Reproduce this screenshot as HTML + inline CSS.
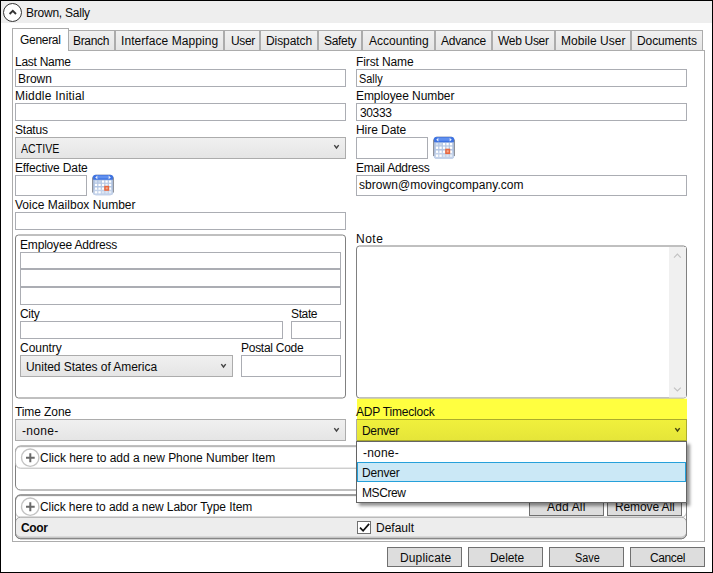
<!DOCTYPE html>
<html lang="en"><head><meta charset="utf-8"><title>Brown, Sally</title>
<style>
html,body{margin:0;padding:0}
body{width:713px;height:573px;position:relative;overflow:hidden;background:#fff;font-family:"Liberation Sans",sans-serif;font-size:12px;color:#000}
.t{position:absolute;white-space:nowrap;line-height:16px;height:16px;color:#0a0a0a;z-index:4}
.b{position:absolute;box-sizing:border-box}
.frame{left:0;top:0;width:713px;height:573px;border:1px solid #000;z-index:20}
.hdr{left:1px;top:1px;width:711px;height:21.5px;background:#eeeeee}
.panel{left:12px;top:50px;width:693px;height:492px;border:1px solid #acacac;background:#fff}
.tab{top:30px;height:21px;border:1px solid #acacac;background:linear-gradient(#f0f0f0,#e5e5e5)}
.tab.sel{top:28px;height:23px;background:#fff;border-bottom:none;z-index:2}
.tb{border:1px solid #abadb3;background:#fff}
.cb{border:1px solid #acacac;background:linear-gradient(#f0f0f0,#e5e5e5)}
.btn{border:1px solid #707070;background:#dddddd}
.dd{border:1px solid #646464;background:#fff;z-index:6;box-shadow:3px 3px 3px rgba(0,0,0,.42)}
.ddsel{border:1px solid #26a0da;background:#cbe8f6;z-index:6}
.sb{background:#f0f0f0}
svg{position:absolute;overflow:visible}
.ar{fill:none;stroke:#444;stroke-width:1.4}
.gb{fill:#fff;stroke:#808080;stroke-width:1}
.gl{fill:none;stroke:#b8b8b8;stroke-width:1}

</style></head>
<body>
<div class="b hdr"></div>
<svg style="left:3px;top:3px" width="19" height="19" viewBox="0 0 19 19"><circle cx="9.5" cy="9.5" r="9" fill="#fff" stroke="#333" stroke-width="1"/><path d="M6.6 11 L9.8 7.8 L13 11" fill="none" stroke="#333" stroke-width="1.9"/></svg>
<div class="b panel"></div>
<div class="b tab sel" style="left:12px;width:57px"></div>
<div class="b tab" style="left:68px;width:47px"></div>
<div class="b tab" style="left:115px;width:109px"></div>
<div class="b tab" style="left:224px;width:36px"></div>
<div class="b tab" style="left:260px;width:58px"></div>
<div class="b tab" style="left:318px;width:44px"></div>
<div class="b tab" style="left:362px;width:73px"></div>
<div class="b tab" style="left:435px;width:57px"></div>
<div class="b tab" style="left:492px;width:63px"></div>
<div class="b tab" style="left:555px;width:76px"></div>
<div class="b tab" style="left:631px;width:72px"></div>

<div class="b tb" style="left:15px;top:69px;width:331px;height:18px"></div>
<div class="b tb" style="left:15px;top:103px;width:331px;height:18px"></div>
<div class="b cb" style="left:15px;top:137px;width:331px;height:22px"></div>
<div class="b tb" style="left:15px;top:175px;width:72px;height:21px"></div>
<div class="b tb" style="left:15px;top:212px;width:331px;height:18px"></div>

<div class="b tb" style="left:356px;top:69px;width:331px;height:18px"></div>
<div class="b tb" style="left:356px;top:103px;width:331px;height:18px"></div>
<div class="b tb" style="left:356px;top:137px;width:72px;height:22px"></div>
<div class="b tb" style="left:356px;top:175px;width:331px;height:21px"></div>

<svg style="left:0;top:0" width="713" height="573" viewBox="0 0 713 573">
<!-- note -->
<rect class="gb" x="356.5" y="246" width="330" height="152" rx="3"/>
<rect x="669" y="247" width="17" height="150.5" fill="#f0f0f0"/>
<path d="M674 257.6 L677.4 254.2 L680.8 257.6" fill="none" stroke="#c2c2c2" stroke-width="1.2"/>
<path d="M674 387.6 L677.4 391 L680.8 387.6" fill="none" stroke="#c2c2c2" stroke-width="1.2"/>
<!-- employee address -->
<rect class="gb" x="15.5" y="235" width="330" height="163" rx="3"/>
<!-- phone -->
<rect class="gb" x="15.5" y="446" width="671" height="44" rx="5"/>
<rect class="gl" x="15.5" y="446.7" width="671" height="21.5" rx="5"/>
<circle cx="30.2" cy="457.7" r="8.7" fill="#fff" stroke="#c4c4c4" stroke-width="1.4"/>
<path d="M26 457.7 H34.7 M30.3 453.2 V462.3" fill="none" stroke="#6a6a6a" stroke-width="2"/>
<!-- labor -->
<rect class="gb" x="15.5" y="495" width="671" height="43.6" rx="5"/>
<rect class="gl" x="15.5" y="495.7" width="671" height="21.5" rx="5"/>
<rect x="15.5" y="517.3" width="671" height="21.4" rx="5" fill="#c6c6c6" stroke="#a0a0a0"/>
<rect x="16" y="517.8" width="670" height="18.6" rx="4.5" fill="#ededed"/>
<rect x="15.5" y="495" width="671" height="43.7" rx="5" fill="none" stroke="#808080"/>
<circle cx="30.2" cy="506.7" r="8.7" fill="#fff" stroke="#c4c4c4" stroke-width="1.4"/>
<path d="M26 506.7 H34.7 M30.3 502.2 V511.3" fill="none" stroke="#6a6a6a" stroke-width="2"/>
<!-- checkbox -->
<rect x="357.5" y="521.5" width="13" height="12" fill="#fff" stroke="#707070"/>
<path d="M360 527.6 L363.1 530.8 L369.1 523.9" fill="none" stroke="#111" stroke-width="1.7"/>
</svg>

<div class="b tb" style="left:20px;top:252px;width:321px;height:17px"></div>
<div class="b tb" style="left:20px;top:269px;width:321px;height:18px"></div>
<div class="b tb" style="left:20px;top:287px;width:321px;height:18px"></div>
<div class="b tb" style="left:20px;top:321px;width:263px;height:18px"></div>
<div class="b tb" style="left:291px;top:321px;width:50px;height:18px"></div>
<div class="b cb" style="left:20px;top:355px;width:213px;height:22px"></div>
<div class="b tb" style="left:241px;top:355px;width:100px;height:22px"></div>

<div class="b cb" style="left:15px;top:419px;width:331px;height:22px"></div>

<div class="b btn" style="left:529px;top:496px;width:75px;height:20px"></div>
<div class="b btn" style="left:607px;top:496px;width:75px;height:20px"></div>

<svg style="left:0;top:0" width="713" height="573" viewBox="0 0 713 573">
<path class="ar" d="M334.3 145.1 L336.5 148 L338.7 145.1"/>
<path class="ar" d="M221.3 364.1 L223.5 367 L225.7 364.1"/>
<path class="ar" d="M334.3 428.1 L336.5 431 L338.7 428.1"/>
</svg>
<!-- calendar icons -->
<svg style="left:92px;top:174px" width="22" height="22" viewBox="0 0 22 22">
<rect x="0.5" y="0.8" width="21" height="20.4" rx="3.6" fill="#b3c6e4"/>
<rect x="1" y="15" width="20" height="6.2" rx="3" fill="#c3d2ea"/>
<path d="M0.5 5.8 V4.4 Q0.5 0.8 4.1 0.8 H17.9 Q21.5 0.8 21.5 4.4 V5.8 Z" fill="#3d72e2"/>
<rect x="5.5" y="1.8" width="11" height="2.6" fill="#6090f0"/>
<path d="M3.2 3.4 L5.4 1.6 V5.2 Z M18.8 3.4 L16.6 1.6 V5.2 Z" fill="#e8eefc"/>
<path d="M0.6 3.5 V18.5 M21.4 3.5 V18.5" stroke="#8c8f96" stroke-width="1.1" fill="none"/>
<path d="M3.5 0.6 H18.5" stroke="#c9cdd6" stroke-width="0.8" fill="none"/>
<g fill="#fff">
<rect x="2.9" y="6.5" width="2.3" height="2.2" opacity="0.45"/><rect x="6.4" y="6.5" width="2.3" height="2.2" opacity="0.35"/><rect x="9.9" y="6.5" width="2.3" height="2.2"/><rect x="13.4" y="6.5" width="2.3" height="2.2"/><rect x="16.9" y="6.5" width="2.3" height="2.2"/><rect x="2.9" y="9.8" width="2.3" height="2.2"/><rect x="6.4" y="9.8" width="2.3" height="2.2"/><rect x="9.9" y="9.8" width="2.3" height="2.2"/><rect x="13.4" y="9.8" width="2.3" height="2.2" opacity="0.8"/><rect x="16.9" y="9.8" width="2.3" height="2.2"/><rect x="2.9" y="13.5" width="2.3" height="2.2"/><rect x="6.4" y="13.5" width="2.3" height="2.2"/><rect x="9.9" y="13.5" width="2.3" height="2.2"/><rect x="16.9" y="13.5" width="2.3" height="2.2"/><rect x="2.9" y="17.2" width="2.3" height="2.2"/><rect x="6.4" y="17.2" width="2.3" height="2.2"/><rect x="9.9" y="17.2" width="2.3" height="2.2" opacity="0.45"/><rect x="13.4" y="17.2" width="2.3" height="2.2" opacity="0.45"/><rect x="16.9" y="17.2" width="2.3" height="2.2" opacity="0.6"/>
</g>
<rect x="12.2" y="11.8" width="5" height="5" fill="#e8683f"/><rect x="13.7" y="13.3" width="2" height="2" fill="#f4ac93"/>
</svg>
<svg style="left:433px;top:136px" width="22" height="23.7" viewBox="0 0 22 22" preserveAspectRatio="none">
<rect x="0.5" y="0.8" width="21" height="20.4" rx="3.6" fill="#b3c6e4"/>
<rect x="1" y="15" width="20" height="6.2" rx="3" fill="#c3d2ea"/>
<path d="M0.5 5.8 V4.4 Q0.5 0.8 4.1 0.8 H17.9 Q21.5 0.8 21.5 4.4 V5.8 Z" fill="#3d72e2"/>
<rect x="5.5" y="1.8" width="11" height="2.6" fill="#6090f0"/>
<path d="M3.2 3.4 L5.4 1.6 V5.2 Z M18.8 3.4 L16.6 1.6 V5.2 Z" fill="#e8eefc"/>
<path d="M0.6 3.5 V18.5 M21.4 3.5 V18.5" stroke="#8c8f96" stroke-width="1.1" fill="none"/>
<path d="M3.5 0.6 H18.5" stroke="#c9cdd6" stroke-width="0.8" fill="none"/>
<g fill="#fff">
<rect x="2.9" y="6.5" width="2.3" height="2.2" opacity="0.45"/><rect x="6.4" y="6.5" width="2.3" height="2.2" opacity="0.35"/><rect x="9.9" y="6.5" width="2.3" height="2.2"/><rect x="13.4" y="6.5" width="2.3" height="2.2"/><rect x="16.9" y="6.5" width="2.3" height="2.2"/><rect x="2.9" y="9.8" width="2.3" height="2.2"/><rect x="6.4" y="9.8" width="2.3" height="2.2"/><rect x="9.9" y="9.8" width="2.3" height="2.2"/><rect x="13.4" y="9.8" width="2.3" height="2.2" opacity="0.8"/><rect x="16.9" y="9.8" width="2.3" height="2.2"/><rect x="2.9" y="13.5" width="2.3" height="2.2"/><rect x="6.4" y="13.5" width="2.3" height="2.2"/><rect x="9.9" y="13.5" width="2.3" height="2.2"/><rect x="16.9" y="13.5" width="2.3" height="2.2"/><rect x="2.9" y="17.2" width="2.3" height="2.2"/><rect x="6.4" y="17.2" width="2.3" height="2.2"/><rect x="9.9" y="17.2" width="2.3" height="2.2" opacity="0.45"/><rect x="13.4" y="17.2" width="2.3" height="2.2" opacity="0.45"/><rect x="16.9" y="17.2" width="2.3" height="2.2" opacity="0.6"/>
</g>
<rect x="12.2" y="11.8" width="5" height="5" fill="#e8683f"/><rect x="13.7" y="13.3" width="2" height="2" fill="#f4ac93"/>
</svg>


<svg style="left:0;top:0" width="713" height="573" viewBox="0 0 713 573">
<defs><linearGradient id="cby" x1="0" y1="0" x2="0" y2="1"><stop offset="0" stop-color="#f0f03c"/><stop offset="1" stop-color="#e5e539"/></linearGradient></defs>
<rect x="357" y="398.7" width="330" height="42.3" fill="#ffff40"/>
<rect x="356.5" y="419.5" width="330" height="21" fill="url(#cby)" stroke="#acac2b"/>
<rect x="356" y="419" width="1" height="22" fill="#acacac"/>
<path d="M675.3 428.1 L677.5 431 L679.7 428.1" fill="none" stroke="#444411" stroke-width="1.4"/>
</svg>
<div class="b dd" style="left:356px;top:441px;width:331px;height:62px"></div>
<div class="b ddsel" style="left:357px;top:462px;width:329px;height:20px"></div>

<div class="b btn" style="left:387px;top:547px;width:75px;height:20px"></div>
<div class="b btn" style="left:468px;top:547px;width:75px;height:20px"></div>
<div class="b btn" style="left:549px;top:547px;width:75px;height:20px"></div>
<div class="b btn" style="left:630px;top:547px;width:75px;height:20px"></div>
<div class="b frame"></div>

<span class="t" style="left:26.00px;top:5.00px;letter-spacing:-0.236px;">Brown, Sally</span>
<span class="t" style="left:20.00px;top:32.00px;letter-spacing:-0.300px;">General</span>
<span class="t" style="left:73.00px;top:33.00px;letter-spacing:-0.324px;">Branch</span>
<span class="t" style="left:121.00px;top:33.00px;letter-spacing:0.062px;">Interface Mapping</span>
<span class="t" style="left:231.00px;top:33.00px;letter-spacing:-0.367px;">User</span>
<span class="t" style="left:266.00px;top:33.00px;letter-spacing:-0.071px;">Dispatch</span>
<span class="t" style="left:324.00px;top:33.00px;letter-spacing:-0.300px;">Safety</span>
<span class="t" style="left:369.00px;top:33.00px;letter-spacing:0.022px;">Accounting</span>
<span class="t" style="left:441.00px;top:33.00px;letter-spacing:-0.250px;">Advance</span>
<span class="t" style="left:498.00px;top:33.00px;letter-spacing:-0.314px;">Web User</span>
<span class="t" style="left:561.00px;top:33.00px;letter-spacing:0.050px;">Mobile User</span>
<span class="t" style="left:637.00px;top:33.00px;letter-spacing:-0.100px;">Documents</span>
<span class="t" style="left:15.00px;top:54.00px;letter-spacing:-0.263px;">Last Name</span>
<span class="t" style="left:18.00px;top:71.00px;letter-spacing:-0.025px;">Brown</span>
<span class="t" style="left:15.00px;top:88.00px;letter-spacing:0.215px;">Middle Initial</span>
<span class="t" style="left:15.00px;top:122.00px;letter-spacing:-0.220px;">Status</span>
<span class="t" style="left:21.00px;top:141.00px;transform:scaleX(0.8837);transform-origin:0 0;">ACTIVE</span>
<span class="t" style="left:15.00px;top:160.00px;letter-spacing:-0.131px;">Effective Date</span>
<span class="t" style="left:15.00px;top:197.00px;letter-spacing:0.026px;">Voice Mailbox Number</span>
<span class="t" style="left:20.00px;top:237.00px;letter-spacing:-0.180px;">Employee Address</span>
<span class="t" style="left:20.00px;top:306.00px;letter-spacing:-0.300px;">City</span>
<span class="t" style="left:291.00px;top:306.00px;letter-spacing:-0.375px;">State</span>
<span class="t" style="left:20.00px;top:340.00px;letter-spacing:-0.033px;">Country</span>
<span class="t" style="left:241.00px;top:340.00px;letter-spacing:-0.270px;">Postal Code</span>
<span class="t" style="left:26.00px;top:359.00px;letter-spacing:-0.043px;">United States of America</span>
<span class="t" style="left:15.00px;top:404.00px;letter-spacing:-0.092px;">Time Zone</span>
<span class="t" style="left:22.00px;top:423.00px;letter-spacing:0.300px;">-none-</span>
<span class="t" style="left:40.00px;top:450.00px;letter-spacing:-0.025px;">Click here to add a new Phone Number Item</span>
<span class="t" style="left:40.00px;top:499.00px;letter-spacing:-0.079px;">Click here to add a new Labor Type Item</span>
<span class="t" style="left:21.00px;top:520.00px;letter-spacing:-0.333px;font-weight:bold;">Coor</span>
<span class="t" style="left:356.00px;top:54.00px;letter-spacing:-0.111px;">First Name</span>
<span class="t" style="left:359.39px;top:71.00px;transform:scaleX(0.9080);transform-origin:0 0;">Sally</span>
<span class="t" style="left:356.00px;top:88.00px;letter-spacing:-0.071px;">Employee Number</span>
<span class="t" style="left:360.00px;top:105.00px;letter-spacing:-0.375px;">30333</span>
<span class="t" style="left:356.00px;top:122.00px;letter-spacing:-0.062px;">Hire Date</span>
<span class="t" style="left:356.00px;top:160.00px;letter-spacing:-0.250px;">Email Address</span>
<span class="t" style="left:359.00px;top:177.00px;letter-spacing:0.052px;">sbrown@movingcompany.com</span>
<span class="t" style="left:356.00px;top:231.00px;letter-spacing:0.500px;">Note</span>
<span class="t" style="left:547.00px;top:499.00px;letter-spacing:0.167px;z-index:1;">Add All</span>
<span class="t" style="left:615.00px;top:499.00px;letter-spacing:-0.111px;z-index:1;">Remove All</span>
<span class="t" style="left:376.00px;top:520.00px;">Default</span>
<span class="t" style="left:356.00px;top:404.00px;letter-spacing:-0.200px;">ADP Timeclock</span>
<span class="t" style="left:362.00px;top:423.00px;letter-spacing:-0.300px;">Denver</span>
<span class="t" style="left:363.00px;top:445.00px;letter-spacing:0.200px;z-index:7;">-none-</span>
<span class="t" style="left:362.00px;top:465.00px;letter-spacing:-0.200px;z-index:7;">Denver</span>
<span class="t" style="left:362.00px;top:485.00px;letter-spacing:-0.400px;z-index:7;">MSCrew</span>
<span class="t" style="left:400.00px;top:550.00px;letter-spacing:0.135px;">Duplicate</span>
<span class="t" style="left:490.00px;top:550.00px;letter-spacing:-0.100px;">Delete</span>
<span class="t" style="left:574.60px;top:550.00px;transform:scaleX(0.9038);transform-origin:0 0;">Save</span>
<span class="t" style="left:650.00px;top:550.00px;letter-spacing:-0.380px;">Cancel</span>
</body></html>
